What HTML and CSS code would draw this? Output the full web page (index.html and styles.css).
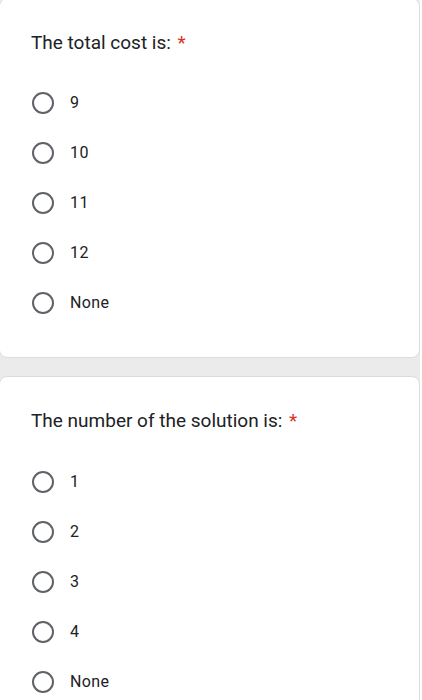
FILE: index.html
```html
<!DOCTYPE html>
<html>
<head>
<meta charset="utf-8">
<link rel="stylesheet" href="styles.css">
</head>
<body>
<div class="page">
  <div class="card first">
    <div class="title">The total cost is: <span class="req">*</span></div>
    <div class="options">
      <div class="opt"><span class="radio"></span><span class="label">9</span></div>
      <div class="opt"><span class="radio"></span><span class="label">10</span></div>
      <div class="opt"><span class="radio"></span><span class="label">11</span></div>
      <div class="opt"><span class="radio"></span><span class="label">12</span></div>
      <div class="opt"><span class="radio"></span><span class="label">None</span></div>
    </div>
  </div>
  <div class="card">
    <div class="title">The number of the solution is: <span class="req">*</span></div>
    <div class="options">
      <div class="opt"><span class="radio"></span><span class="label">1</span></div>
      <div class="opt"><span class="radio"></span><span class="label">2</span></div>
      <div class="opt"><span class="radio"></span><span class="label">3</span></div>
      <div class="opt"><span class="radio"></span><span class="label">4</span></div>
      <div class="opt"><span class="radio"></span><span class="label">None</span></div>
    </div>
  </div>
</div>
</body>
</html>
```

FILE: styles.css
```css
html, body {
  margin: 0;
  padding: 0;
  background: #ffffff;
  height: 700px;
  overflow: hidden;
}
.page {
  width: 421px;
  margin-left: -1px;
  background: #ebebeb;
  display: flex;
  flex-direction: column;
  gap: 18px;
  font-family: Roboto, "Liberation Sans", sans-serif;
  color: #202124;
}
.card {
  background: #ffffff;
  border: 1px solid #dadce0;
  border-radius: 8px;
  padding: 32px 30px 30px 31px;
}
.card.first {
  margin-top: -2px;
  height: 296px;
}
.title {
  font-size: 19px;
  line-height: 24px;
}
.req {
  color: #d93025;
  margin-left: 2px;
}
.options {
  margin-top: 24px;
  display: flex;
  flex-direction: column;
}
.first .options {
  margin-top: 23px;
}
.opt {
  height: 50px;
  display: flex;
  align-items: center;
}
.radio {
  width: 18px;
  height: 18px;
  border: 2px solid #5f6368;
  border-radius: 50%;
  margin-left: 1px;
  flex: none;
}
.label {
  margin-left: 16px;
  font-size: 16px;
  line-height: 20px;
  letter-spacing: 0.4px;
}
```
